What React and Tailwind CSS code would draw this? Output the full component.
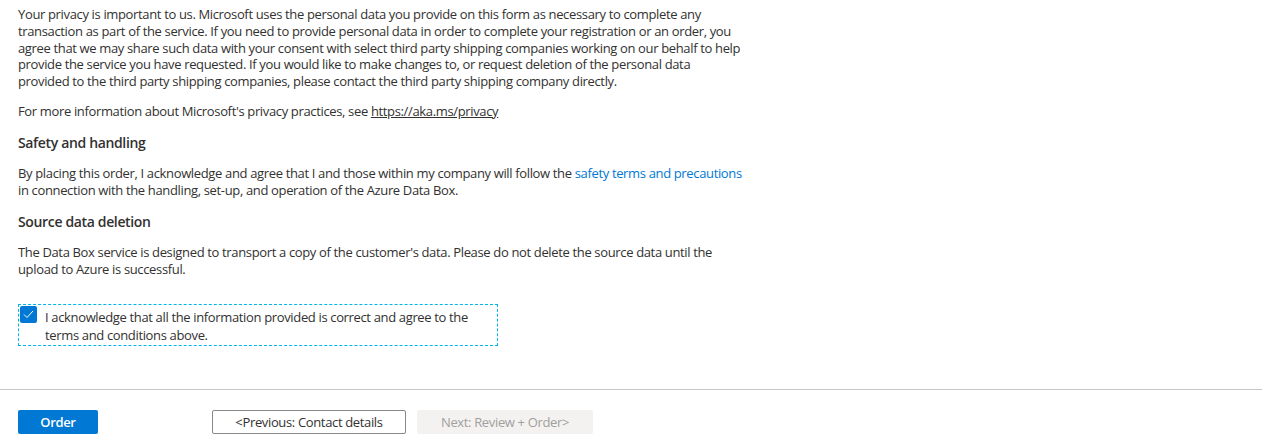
import { useState } from "react";

const font = "font-['Open_Sans','Noto_Sans',sans-serif]";

// lines broken by hand so the wrap matches the original form
const privacyLines = [
  "Your privacy is important to us. Microsoft uses the personal data you provide on this form as necessary to complete any",
  "transaction as part of the service. If you need to provide personal data in order to complete your registration or an order, you",
  "agree that we may share such data with your consent with select third party shipping companies working on our behalf to help",
  "provide the service you have requested. If you would like to make changes to, or request deletion of the personal data",
  "provided to the third party shipping companies, please contact the third party shipping company directly.",
];

const Lines = ({ lines }) =>
  lines.map((l, i) => (
    <span key={i} className="block whitespace-nowrap">
      {l}
    </span>
  ));

const App = () => {
  const [agreed, setAgreed] = useState(true);

  return (
    <div className={`${font} w-[1262px] h-[448px] bg-white text-[#323130] text-[13px] tracking-[-0.35px] overflow-hidden`}>
      <div className="px-[18px] pt-[6px]">
        {/* Privacy */}
        <p className="leading-[16.8px]">
          <Lines lines={privacyLines} />
        </p>
        <p className="leading-[17px] mt-[13px]">
          For more information about Microsoft's privacy practices, see{" "}
          <a href="#" className="underline">
            https://aka.ms/privacy
          </a>
        </p>

        {/* Safety */}
        <h3 className="text-[14px] font-semibold leading-[20px] mt-[13px]">
          Safety and handling
        </h3>
        <p className="leading-[17px] mt-[12px] whitespace-nowrap">
          By placing this order, I acknowledge and agree that I and those within my company will follow the{" "}
          <a href="#" className="text-[#0078d4]">
            safety terms and precautions
          </a>
          <br />
          in connection with the handling, set-up, and operation of the Azure Data Box.
        </p>

        {/* Source data */}
        <h3 className="text-[14px] font-semibold leading-[20px] mt-[13px]">
          Source data deletion
        </h3>
        <p className="leading-[17px] mt-[12px] whitespace-nowrap">
          The Data Box service is designed to transport a copy of the customer's data. Please do not delete the source data until the
          <br />
          upload to Azure is successful.
        </p>

        {/* Acknowledge */}
        <label className="mt-[26px] flex w-[480px] h-[42px] border border-dashed border-[#00b4f0] cursor-pointer">
          <span
            onClick={() => setAgreed(!agreed)}
            className={`mt-[1px] ml-[1px] w-[17px] h-[17px] shrink-0 rounded-[2px] flex items-center justify-center ${
              agreed ? "bg-[#0078d4]" : "border border-[#323130]"
            }`}
          >
            {agreed && (
              <svg width="11" height="9" viewBox="0 0 11 9" fill="none">
                <path d="M1 4.5 L4 7.5 L10 1" stroke="white" strokeWidth="1" />
              </svg>
            )}
          </span>
          <span className="ml-[8px] mt-[3px] leading-[18px]">
            I acknowledge that all the information provided is correct and agree to the
            <br />
            terms and conditions above.
          </span>
        </label>
      </div>

      <div className="mt-[43px] border-t border-[#c8c6c4]" />

      {/* Footer */}
      <div className="flex items-center px-[18px] pt-[20px]">
        <button className="w-[80px] h-[24px] rounded-[2px] bg-[#0078d4] text-white font-semibold leading-[24px]">
          Order
        </button>
        <button className="ml-[114px] w-[194px] h-[24px] rounded-[2px] border border-[#8a8886] bg-white leading-[22px]">
          &lt;Previous: Contact details
        </button>
        <button className="ml-[11px] w-[176px] h-[24px] rounded-[2px] bg-[#f3f2f1] text-[#a19f9d] leading-[24px] cursor-default">
          Next: Review + Order&gt;
        </button>
      </div>
    </div>
  );
};

export default App;
